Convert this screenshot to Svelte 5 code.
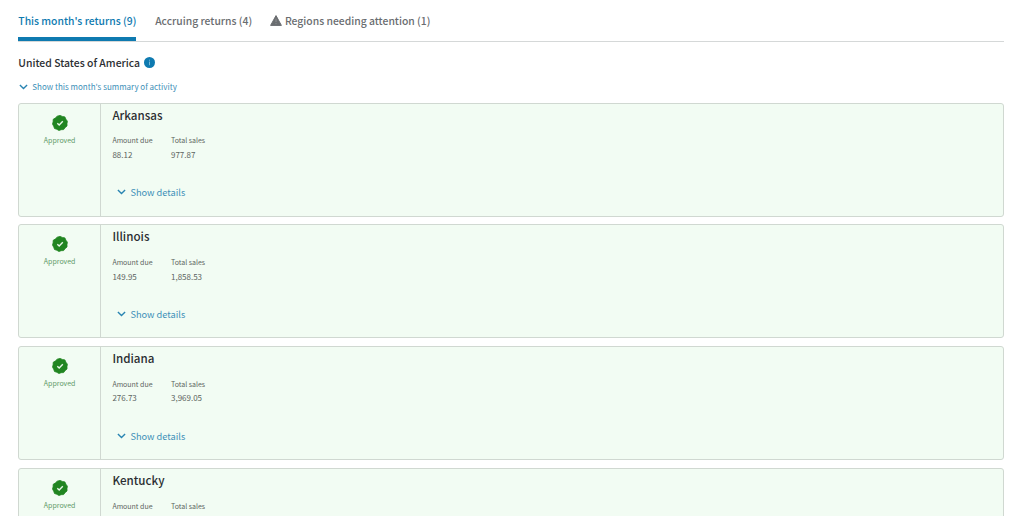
<script lang="ts">
	const tabs = [
		{ label: "This month's returns (9)", warning: false },
		{ label: 'Accruing returns (4)', warning: false },
		{ label: 'Regions needing attention (1)', warning: true }
	];

	const returns = [
		{ region: 'Arkansas', due: '88.12', sales: '977.87' },
		{ region: 'Illinois', due: '149.95', sales: '1,858.53' },
		{ region: 'Indiana', due: '276.73', sales: '3,969.05' },
		{ region: 'Kentucky', due: '', sales: '' }
	];

	let active = $state(0);
</script>

{#snippet chevron()}
	<svg class="chevron" viewBox="0 0 9 6" width="9" height="6">
		<path d="M0.9 1 4.5 4.5 8.1 1" />
	</svg>
{/snippet}

<main>
	<nav>
		{#each tabs as tab, i}
			<button class="tab" class:active={active === i} onclick={() => (active = i)}>
				{#if tab.warning}
					<svg class="warning" viewBox="0 0 12 11" width="12" height="11">
						<path d="M6 0.6 11.4 10.4H0.6Z" fill="#6a6d70" stroke="#6a6d70" stroke-linejoin="round" />
						<path d="M6 3.7v3.3M6 8.1v1.1" stroke="#8d8f91" stroke-width="1" />
					</svg>
				{/if}
				<span>{tab.label}</span>
			</button>
		{/each}
	</nav>

	<h1>
		<span>United States of America</span>
		<svg viewBox="0 0 11 11" width="11" height="11">
			<circle cx="5.5" cy="5.5" r="5.5" fill="#0e7ab0" />
			<path d="M5.5 2.7v1M5.5 4.6v3.6" stroke="#79b8d6" />
		</svg>
	</h1>

	<button class="link summary">
		{@render chevron()}
		<span>Show this month's summary of activity</span>
	</button>

	<div class="cards">
		{#each returns as item}
			<section class="card">
				<div class="status">
					<svg viewBox="0 0 16 16" width="16" height="16">
						<path
							d="M8 .4 10.3 1.4 12.9 1.9 13.9 4.2 15.4 6.2 15 8.5 15 11 13.2 12.6 11.6 14.6 9.2 14.7 6.9 15.5 4.9 14.3 2.5 13.5 1.7 11.2.5 9.1 1.1 6.8 1.2 4.3 3.3 3 5.2 1.2Z"
							fill="#218521"
							stroke="#218521"
							stroke-width=".8"
							stroke-linejoin="round"
						/>
						<path d="M5.3 8.2 7.2 10 10.8 6.3" fill="none" stroke="#e9f7e9" stroke-width="1.4" />
					</svg>
					<span>Approved</span>
				</div>
				<div class="body">
					<h2>{item.region}</h2>
					<dl>
						<div class="due">
							<dt>Amount due</dt>
							<dd>{item.due}</dd>
						</div>
						<div>
							<dt>Total sales</dt>
							<dd>{item.sales}</dd>
						</div>
					</dl>
					{#if item.due}
						<button class="link details">
							{@render chevron()}
							<span>Show details</span>
						</button>
					{/if}
				</div>
			</section>
		{/each}
	</div>
</main>

<style>
	:global(body) {
		background: #fff;
	}

	main {
		box-sizing: border-box;
		height: 516px;
		overflow: hidden;
		padding: 0 20px 0 18.3px;
		font-family: 'Noto Sans CJK SC', 'Noto Sans', sans-serif;
		color: #2b2e31;
	}

	button {
		display: flex;
		align-items: center;
		padding: 0;
		border: 0;
		background: none;
		font: inherit;
		cursor: pointer;
		white-space: nowrap;
	}

	nav {
		display: flex;
		gap: 18.8px;
		height: 41px;
		border-bottom: 1px solid #d5d8d8;
	}

	.tab {
		box-sizing: border-box;
		height: 41px;
		padding-top: 4.5px;
		border-bottom: 4px solid transparent;
		color: #6a6d70;
		font-size: 10.36px;
		font-weight: 500;
	}

	.tab.active {
		color: #0e7ab0;
		border-color: #0e7ab0;
	}

	.warning {
		margin: 0 3px 0 -1px;
	}

	h1 {
		display: flex;
		align-items: center;
		gap: 3.5px;
		height: 16px;
		margin: 12.6px 0 0;
		font-size: 10.42px;
		font-weight: 500;
		line-height: 16px;
	}

	h1 svg {
		margin-top: -1px;
	}

	.link {
		color: #4090b8;
	}

	.chevron {
		fill: none;
		stroke: #2984b2;
		stroke-width: 1.4;
	}

	.summary {
		gap: 4px;
		height: 12px;
		margin: 10.4px 0 0 1px;
		font-size: 8px;
		line-height: 12px;
	}

	.cards {
		display: flex;
		flex-direction: column;
		gap: 7.7px;
		margin-top: 9.8px;
	}

	.card {
		box-sizing: border-box;
		display: flex;
		flex: none;
		height: 114px;
		border: 1px solid #d0d8d1;
		border-radius: 3px;
		background: #f2fcf3;
	}

	.status {
		box-sizing: border-box;
		display: flex;
		flex-direction: column;
		align-items: center;
		width: 81.7px;
		padding-top: 11px;
		border-right: 1px solid #d0d8d1;
		color: #5f9a68;
		font-size: 7px;
		line-height: 10px;
	}

	.status span {
		margin-top: 4px;
	}

	.body {
		padding: 2px 0 0 11.4px;
	}

	h2 {
		margin: 0;
		font-size: 11.6px;
		font-weight: 500;
		line-height: 18px;
	}

	dl {
		display: flex;
		margin: 11.7px 0 0;
		color: #5c6460;
	}

	.due {
		width: 58.6px;
	}

	dt {
		font-size: 7px;
		line-height: 10px;
	}

	dd {
		margin: 3.5px 0 0;
		height: 12px;
		font-size: 8px;
		line-height: 12px;
	}

	.details {
		gap: 4px;
		height: 16px;
		margin: 23.4px 0 0 5px;
		font-size: 9.25px;
		line-height: 16px;
	}
</style>
